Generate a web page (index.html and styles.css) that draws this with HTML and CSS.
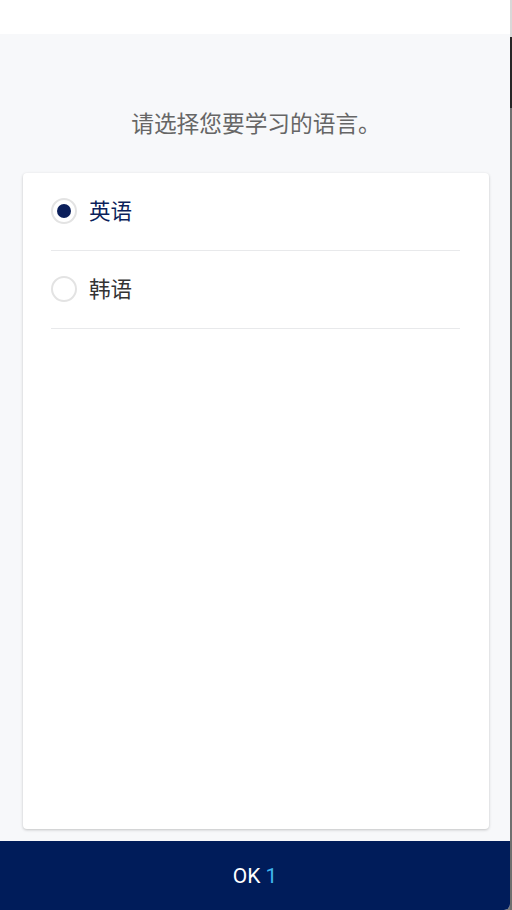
FILE: index.html
```html
<!DOCTYPE html>
<html lang="zh">
<head>
<meta charset="utf-8">
<link rel="stylesheet" href="styles.css">
</head>
<body>
<div class="app">
  <div class="topbar"></div>
  <main class="main">
    <h1 class="title">请选择您要学习的语言。</h1>
    <div class="card">
      <label class="row selected">
        <span class="radio"><span class="dot"></span></span>
        <span class="label">英语</span>
      </label>
      <label class="row">
        <span class="radio"></span>
        <span class="label">韩语</span>
      </label>
    </div>
  </main>
  <div class="okbar"><span class="ok">OK</span> <span class="count">1</span></div>
</div>
<div class="edge"></div>
</body>
</html>
```
FILE: styles.css
```css
html, body {
  margin: 0;
  padding: 0;
}
body {
  width: 512px;
  height: 910px;
  display: flex;
  background: #7a7a7a;
  overflow: hidden;
  font-family: "Noto Sans CJK SC", "Noto Sans", sans-serif;
}
.app {
  width: 510px;
  height: 910px;
  display: flex;
  flex-direction: column;
  background: #f7f8fa;
  border-bottom-right-radius: 6px;
  overflow: hidden;
}
.edge {
  width: 2px;
  height: 910px;
  background: linear-gradient(#d8d8d8 0, #d8d8d8 37px, #262626 37px, #262626 108px, #6f6f6f 108px, #6f6f6f 100%);
}
.topbar {
  height: 34px;
  background: #ffffff;
  flex: none;
}
.main {
  flex: 1;
  display: flex;
  flex-direction: column;
  padding: 0 21px 12px 23px;
  min-height: 0;
}
.title {
  margin: 0;
  padding: 74px 0 35px;
  font-size: 22.7px;
  line-height: 30px;
  font-weight: 400;
  color: #666666;
  text-align: center;
}
.card {
  flex: 1;
  background: #ffffff;
  border-radius: 4px;
  box-shadow: 0 1px 3px rgba(0, 0, 0, 0.22);
  padding: 0 29px 0 28px;
}
.row {
  display: flex;
  align-items: center;
  height: 77px;
  border-bottom: 1px solid #e8e9eb;
}
.radio {
  width: 22px;
  height: 22px;
  border: 2px solid #e3e3e3;
  border-radius: 50%;
  display: flex;
  align-items: center;
  justify-content: center;
  margin-right: 12px;
  margin-top: -2px;
  flex: none;
}
.dot {
  width: 14px;
  height: 14px;
  border-radius: 50%;
  background: #0b1f5b;
}
.label {
  font-size: 21.5px;
  line-height: 28px;
  color: #333333;
  margin-top: -3px;
}
.selected .label {
  color: #0b1f5b;
}
.okbar {
  height: 69px;
  flex: none;
  background: #001c5a;
  display: flex;
  align-items: center;
  justify-content: center;
  font-family: Roboto, "Noto Sans", sans-serif;
  font-size: 21px;
  color: #ffffff;
  gap: 5px;
}
.count {
  color: #3fb6ef;
}
```
